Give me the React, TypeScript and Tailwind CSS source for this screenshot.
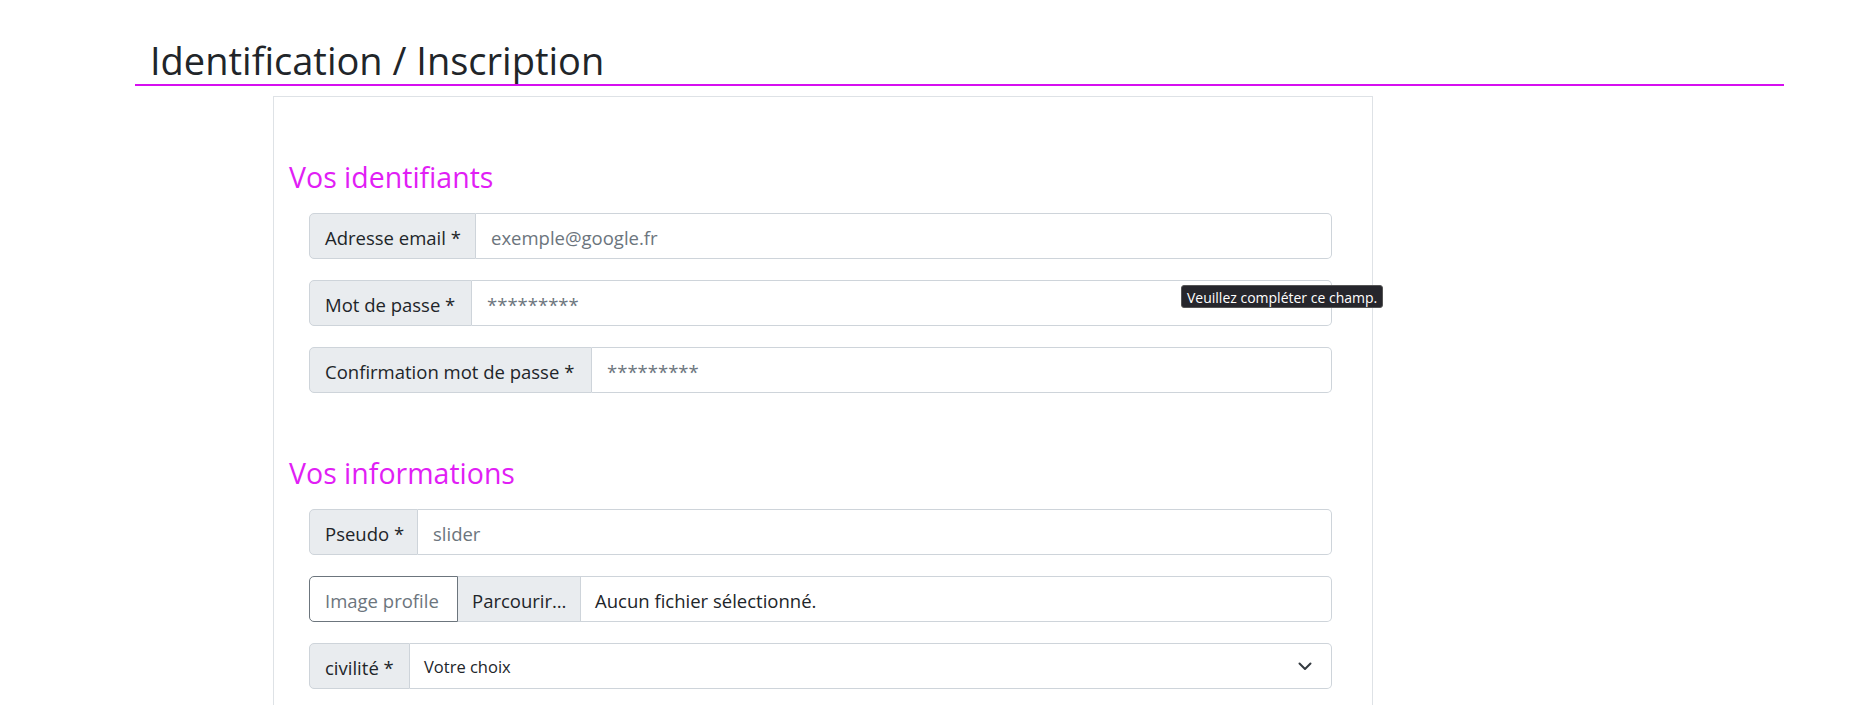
import React from "react";

function Label({ children, w }: { children: React.ReactNode; w: string }) {
  return (
    <span
      className={`${w} shrink-0 flex items-center pt-[4px] px-[15px] bg-[#e9ecef] border border-[#ced4da] rounded-l-[5px] text-[#212529] whitespace-nowrap`}
    >
      {children}
    </span>
  );
}

function Field({ label, w, placeholder }: { label: string; w: string; placeholder: string }) {
  return (
    <div className="flex h-[46px]">
      <Label w={w}>{label}</Label>
      <div className="flex-1 flex items-center pt-[4px] px-[15px] border border-l-0 border-[#ced4da] rounded-r-[5px] text-[#6c757d] bg-white">
        {placeholder}
      </div>
    </div>
  );
}

export default function App() {
  return (
    <div className="relative min-h-[705px] bg-white text-[18.5px] text-[#212529] font-['Segoe_UI','Open_Sans',sans-serif]">
      <div className="pt-[37px]">
        <h1 className="ml-[135px] w-[1649px] border-b-2 border-[#d60ff0] pl-[15px] text-[38px] leading-[47px] font-normal">
          Identification / Inscription
        </h1>
      </div>

      <div className="ml-[273px] mt-[10px] w-[1100px] border border-b-0 border-[#dee2e6] pt-[61px] pl-[15px] pr-[40px] pb-[30px]">
        <h2 className="text-[28.5px] leading-[38px] text-[#e11ef5] mb-[17px]">Vos identifiants</h2>
        <div className="pl-[20px] flex flex-col gap-[21px]">
          <Field label="Adresse email *" w="w-[167px]" placeholder="exemple@google.fr" />
          <Field label="Mot de passe *" w="w-[163px]" placeholder="*********" />
          <Field label="Confirmation mot de passe *" w="w-[283px]" placeholder="*********" />
        </div>

        <h2 className="mt-[61px] text-[28.5px] leading-[38px] text-[#e11ef5] mb-[17px]">Vos informations</h2>
        <div className="pl-[20px] flex flex-col gap-[21px]">
          <Field label="Pseudo *" w="w-[109px]" placeholder="slider" />

          <div className="flex h-[46px]">
            <span className="w-[149px] shrink-0 flex items-center pt-[4px] px-[15px] border border-[#6c757d] rounded-l-[5px] text-[#6c757d] bg-white whitespace-nowrap">
              Image profile
            </span>
            <span className="w-[123px] shrink-0 flex items-center pt-[4px] px-[14px] bg-[#e9ecef] border border-l-0 border-[#ced4da] whitespace-nowrap">
              Parcourir…
            </span>
            <div className="flex-1 flex items-center pt-[4px] px-[14px] border border-l-0 border-[#ced4da] rounded-r-[5px] bg-white">
              Aucun fichier sélectionné.
            </div>
          </div>

          <div className="flex h-[46px]">
            <Label w="w-[101px]">civilité *</Label>
            <div className="flex-1 flex items-center justify-between pt-[3px] pl-[14px] pr-[19px] border border-l-0 border-[#ced4da] rounded-r-[5px] bg-white text-[16.5px]">
              <span>Votre choix</span>
              <svg width="14" height="9" viewBox="0 0 14 9" fill="none" className="-mt-[3px]">
                <path d="M1.5 1.5 L7 7 L12.5 1.5" stroke="#343a40" strokeWidth="2" strokeLinecap="round" strokeLinejoin="round" />
              </svg>
            </div>
          </div>
        </div>
      </div>

      <div className="absolute left-[1181px] top-[285px] h-[23px] px-[5px] pt-[1px] flex items-center bg-[#26262c] text-white text-[14px] rounded-[3px] border border-[#555] whitespace-nowrap">
        Veuillez compléter ce champ.
      </div>
    </div>
  );
}
